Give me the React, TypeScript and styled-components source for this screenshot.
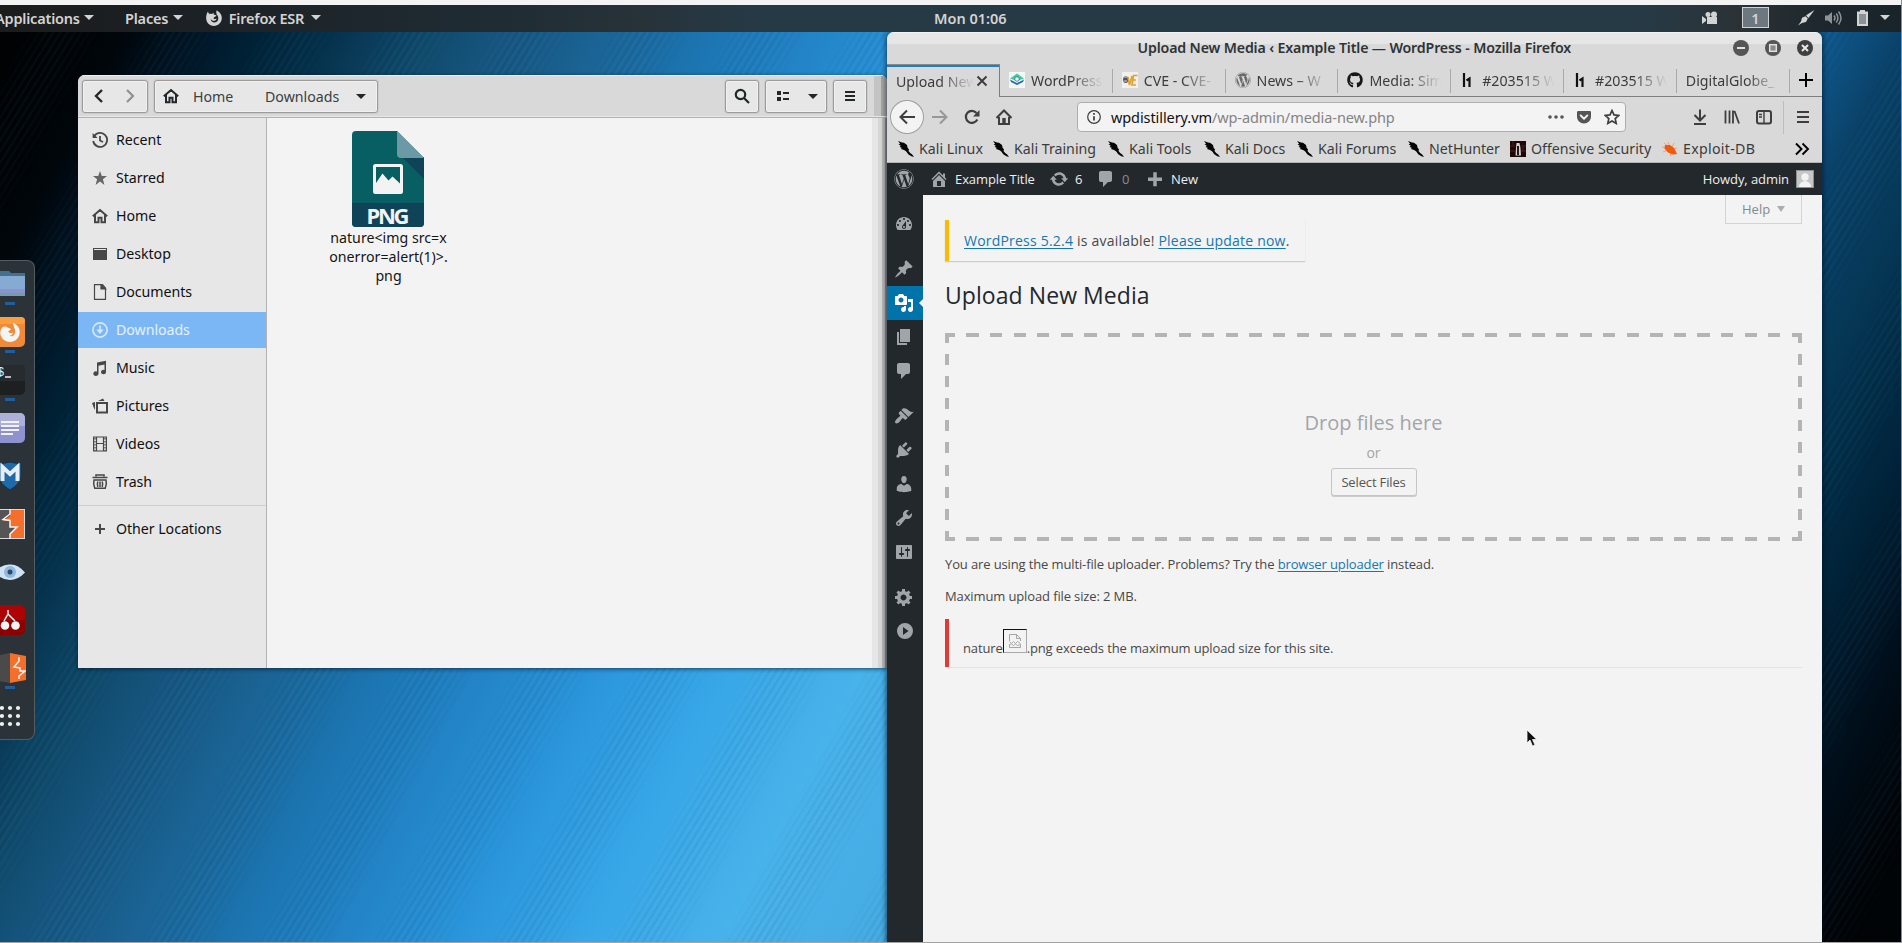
import React from "react";
import styled, { createGlobalStyle, css } from "styled-components";
import { FaGithub, FaWordpress, FaGetPocket } from "react-icons/fa";

const UI = `"Noto Sans", "Open Sans", sans-serif`;
const WEB = `"Open Sans", "Noto Sans", sans-serif`;

const Global = createGlobalStyle`
  * { box-sizing: border-box; }
  html, body { margin: 0; padding: 0; overflow: hidden; background: #f3f3f3; }
  svg { display: block; flex: none; }
  p, h1, h2 { margin: 0; }
`;

/* ---------- desktop ---------- */
const Screen = styled.div`
  width: 1902px;
  height: 943px;
  display: flex;
  flex-direction: column;
  padding-top: 5px;
  border-bottom: 1px solid #a3a3a3;
  border-right: 1px solid #8a9096;
  background: #f3f3f3;
  font-family: ${UI};
  font-size: 14px;
  overflow: hidden;
`;

const Desktop = styled.main`
  position: relative;
  flex: 1;
  overflow: hidden;
  background: linear-gradient(117.5deg,
    #000203 0px, #00060b 110px, #001626 175px, #002236 230px, #06334e 300px,
    #104a6b 380px, #175680 450px, #1b6698 550px, #1c75b1 630px, #2385c8 730px,
    #2b96dc 830px, #38a7e8 940px, #48b2ea 1060px, #45a9e0 1250px,
    #1a6aa5 1560px, #0f5588 1630px, #0a4269 1690px, #053654 1780px,
    #002339 1880px, #00101d 1960px, #000407 2040px);
  &::before {
    content: "";
    position: absolute;
    inset: 0;
    background: repeating-linear-gradient(122deg,
      rgba(0, 20, 45, 0.06) 0 2px, rgba(90, 190, 240, 0.05) 3px 4px, transparent 5px 6px);
    mask-image: repeating-linear-gradient(117.5deg,
      transparent 0 20px, #000 44px 64px, transparent 92px 104px);
  }
`;

const Panel = styled.header`
  height: 27px;
  display: grid;
  grid-template-columns: 1fr auto 1fr;
  align-items: center;
  padding-bottom: 2px;
  background: linear-gradient(90deg, #1b1c1c 0, #1c2125 200px, #1f2b33 480px, #273239 640px,
    #263a46 760px, #263a46 1640px, #2b3236 1740px, #1c262c 1830px, #19232a 100%);
  color: #d3d3d3;
  font-weight: 600;
  font-size: 14.5px;
`;
const PanelLeft = styled.nav`
  display: flex;
  align-items: center;
  margin-left: -5px;
`;
const PanelItem = styled.span<{ $w: number; $after: number }>`
  display: flex;
  align-items: center;
  justify-content: space-between;
  width: ${(p) => p.$w}px;
  margin-right: ${(p) => p.$after}px;
  white-space: nowrap;
  letter-spacing: -0.2px;
`;
const Clock = styled.span`
  width: 71px;
  text-align: center;
  white-space: nowrap;
  margin-left: 38px;
`;
const PanelRight = styled.div`
  display: flex;
  align-items: center;
  justify-content: flex-end;
  padding-right: 11px;
`;
const Workspace = styled.span`
  display: grid;
  place-items: center;
  width: 27px;
  height: 21px;
  margin: 0 28px 0 24px;
  border: 1px solid #d0d3d5;
  background: #6d777f;
`;
const Caret = styled.i<{ $c?: string; $s?: number }>`
  display: block;
  flex: none;
  border: ${(p) => p.$s ?? 5}px solid transparent;
  border-bottom: 0;
  border-top-color: ${(p) => p.$c ?? "#d3d3d3"};
`;

/* ---------- dock ---------- */
const Dock = styled.aside`
  position: absolute;
  left: 0;
  top: 228px;
  width: 35px;
  height: 480px;
  background: #2b3338;
  border: 1px solid #565b5e;
  border-left: 0;
  border-radius: 0 8px 8px 0;
  overflow: hidden;
`;
const DockItem = styled.div<{ $running?: boolean }>`
  display: flex;
  flex-direction: column;
  align-items: center;
  width: 30px;
  height: 48px;
  margin-left: -5px;
  padding-top: 8px;
  &::after {
    content: "";
    width: 10px;
    height: 3px;
    margin-top: 3px;
    background: ${(p) => (p.$running ? "#215d9c" : "transparent")};
  }
`;

/* ---------- file manager ---------- */
const FilesWindow = styled.section`
  position: absolute;
  left: 78px;
  top: 43px;
  width: 809px;
  height: 593px;
  display: flex;
  flex-direction: column;
  background: #f3f3f3;
  border-radius: 7px 7px 0 0;
  box-shadow: 0 1px 4px rgba(0, 15, 30, 0.65);
  overflow: hidden;
`;
const FilesHeader = styled.header`
  display: flex;
  align-items: center;
  height: 43px;
  padding: 0 20px 1px 4px;
  background: linear-gradient(90deg, transparent 796px, #c4c4c4 796px 803px, #a4a4a4 803px), #d9d9d9;
  border-top: 1px solid #efefef;
  border-bottom: 1px solid #b2b2b2;
  box-shadow: inset 0 -1px #e6e6e6;
`;
const ButtonGroup = styled.div<{ $w: number; $ml?: number | string }>`
  display: flex;
  align-items: center;
  justify-content: space-around;
  width: ${(p) => p.$w}px;
  height: 33px;
  margin-left: ${(p) => (typeof p.$ml === "string" ? p.$ml : `${p.$ml ?? 0}px`)};
  background: #e7e7e7;
  border: 1px solid #9b9b9b;
  border-radius: 3px;
  box-shadow: inset 0 0 0 1px #f1f1f1, 0 0 0 1px #cccccc;
  color: #222729;
`;
const Crumb = styled.span<{ $w: number; $ml: number }>`
  width: ${(p) => p.$w}px;
  margin-left: ${(p) => p.$ml}px;
  color: #3a4143;
  font-size: 14.2px;
  white-space: nowrap;
`;
const PathBar = styled(ButtonGroup)`
  justify-content: flex-start;
  padding-left: 8px;
`;
const FilesBody = styled.div`
  display: flex;
  flex: 1;
`;
const Places = styled.nav`
  width: 189px;
  padding-top: 4px;
  background: #e7e7e7;
  border-right: 1px solid #b2b2b2;
`;
const Place = styled.div<{ $active?: boolean }>`
  display: flex;
  align-items: center;
  gap: 8px;
  height: 36px;
  margin-bottom: 2px;
  padding: 0 0 1px 14px;
  color: #474747;
  span { color: #101010; font-size: 14.2px; white-space: nowrap; letter-spacing: -0.05px; }
  ${(p) => p.$active && css`
    background: #7bb7f5;
    color: #d6e8fa;
    span { color: #e6f1fc; }
  `}
`;
const PlaceRule = styled.hr`
  height: 1px;
  margin: 5px 0 5px;
  border: 0;
  background: #d0d0d0;
`;
const FileArea = styled.div`
  flex: 1;
  display: flex;
  justify-content: space-between;
  align-items: flex-start;
`;
const FileTile = styled.figure`
  display: flex;
  flex-direction: column;
  align-items: center;
  width: 130px;
  margin: 13px 0 0 56px;
  figcaption {
    margin-top: 1px;
    padding-left: 1px;
    color: #151515;
    font-size: 14.2px;
    line-height: 19px;
    text-align: center;
    white-space: pre-line;
  }
`;
const EdgeShade = styled.div`
  align-self: stretch;
  width: 15px;
  background: linear-gradient(90deg, #e6e6e6 0 6px, #d6d6d6 6px 10px, #b9b9b9 10px 13px, #8e8e8e 13px);
`;

/* ---------- browser ---------- */
const Browser = styled.section`
  position: absolute;
  left: 887px;
  top: 0;
  width: 935px;
  height: 911px;
  display: flex;
  flex-direction: column;
  background: #d9d9d9;
  border-radius: 7px 7px 0 0;
  box-shadow: 0 0 5px 1px rgba(0, 12, 25, 0.6);
  overflow: hidden;
`;
const TitleBar = styled.header`
  display: grid;
  grid-template-columns: 1fr auto 1fr;
  align-items: center;
  height: 32px;
  padding-right: 9px;
  background: linear-gradient(#f3f3f3 0 1px, #e6e6e6 1px 12px, #d9d9d9 12px);
  h1 {
    width: 434px;
    margin: 0 -9px 2px 0;
    font-size: 14.2px;
    font-weight: 600;
    letter-spacing: -0.15px;
    color: #2e3436;
    white-space: nowrap;
  }
`;
const WindowButtons = styled.div`
  display: flex;
  justify-content: flex-end;
  gap: 16px;
`;
const Tabs = styled.div`
  display: flex;
  height: 33px;
`;
const Tab = styled.div<{ $active?: boolean }>`
  display: flex;
  align-items: center;
  position: relative;
  width: 112.8px;
  padding: 0 10px 0 9px;
  color: #3b3b3b;
  border-bottom: 1px solid #7e7e7e;
  &::after {
    content: "";
    position: absolute;
    right: 0;
    top: 5px;
    width: 1px;
    height: 24px;
    background: #a9a9a9;
  }
  ${(p) => p.$active && css`
    width: 113px;
    padding: 0 9px 0 9px;
    border-bottom: 0;
    border-right: 1px solid #7e7e7e;
    border-top: 1px solid #8a8a8a;
    box-shadow: inset 0 2px #1d7fc4;
    &::after { display: none; }
  `}
`;
const TabTitle = styled.span<{ $ml?: number }>`
  flex: 1;
  min-width: 0;
  margin-left: ${(p) => p.$ml ?? 6}px;
  overflow: hidden;
  white-space: nowrap;
  font-size: 14.2px;
  mask-image: linear-gradient(90deg, #000 calc(100% - 34px), transparent);
`;
const NewTab = styled.div`
  flex: 1;
  display: grid;
  place-items: center;
  border-bottom: 1px solid #7e7e7e;
`;
const NavBar = styled.div`
  display: flex;
  align-items: center;
  height: 39px;
  padding: 1px 11px 0 3px;
  color: #3e3e3e;
`;
const BackButton = styled.div`
  display: grid;
  place-items: center;
  width: 34px;
  height: 34px;
  border: 1px solid #9d9d9d;
  border-radius: 50%;
  background: #f3f3f3;
`;
const NavIcons = styled.div<{ $ml: number; $gap?: number }>`
  display: flex;
  align-items: center;
  gap: ${(p) => p.$gap ?? 16}px;
  margin-left: ${(p) => p.$ml}px;
`;
const UrlBar = styled.div`
  display: flex;
  align-items: center;
  width: 550px;
  height: 30px;
  margin-left: 65px;
  padding: 0 5px 0 9px;
  border: 1px solid #adadad;
  border-radius: 4px;
  background: #f3f3f3;
`;
const Url = styled.span`
  flex: 1;
  margin-left: 10px;
  color: #848484;
  font-size: 14.5px;
  letter-spacing: -0.08px;
  white-space: nowrap;
  b { font-weight: 400; color: #111; }
`;
const NavRule = styled.i`
  width: 1px;
  height: 33px;
  margin: 0 11px 0 11px;
  background: #bdbdbd;
`;
const Bookmarks = styled.div`
  display: flex;
  align-items: center;
  height: 27px;
  padding: 0 11px 1px 11px;
  border-bottom: 1px solid #b4b4b4;
`;
const Bookmark = styled.span<{ $w: number }>`
  display: flex;
  align-items: center;
  gap: 5px;
  width: ${(p) => p.$w + 20}px;
  margin-right: 12px;
  color: #3b3b3b;
  font-size: 14.2px;
  white-space: nowrap;
  &:nth-child(8) { letter-spacing: 0.3px; }
`;

/* ---------- wordpress ---------- */
const AdminBar = styled.div`
  display: flex;
  align-items: center;
  height: 32px;
  padding: 0 8px 0 7px;
  background: #23282d;
  color: #eeeeee;
  font-family: ${WEB};
  font-size: 13px;
  letter-spacing: -0.08px;
`;
const AdminItem = styled.span<{ $w: number; $gap?: number; $dim?: boolean }>`
  display: flex;
  align-items: center;
  gap: ${(p) => p.$gap ?? 6}px;
  width: ${(p) => p.$w}px;
  white-space: nowrap;
  color: ${(p) => (p.$dim ? "#888d91" : "#eeeeee")};
  svg { color: #a0a5aa; }
`;
const Howdy = styled.span`
  display: flex;
  align-items: center;
  gap: 7px;
  margin-left: auto;
`;
const AdminBody = styled.div`
  display: flex;
  flex: 1;
  font-family: ${WEB};
`;
const AdminMenu = styled.nav`
  width: 36px;
  padding-top: 12px;
  background: #23282d;
  color: #a0a5aa;
`;
const MenuItem = styled.div<{ $gap?: boolean; $active?: boolean }>`
  position: relative;
  display: grid;
  place-items: center;
  height: 34px;
  margin-top: ${(p) => (p.$gap ? 11 : 0)}px;
  padding-right: 2px;
  ${(p) => p.$active && css`
    background: #0073aa;
    color: #fff;
    &::after {
      content: "";
      position: absolute;
      right: 0;
      top: 13px;
      border: 4px solid transparent;
      border-left: 0;
      border-right-color: #f3f3f3;
    }
  `}
`;
const Content = styled.div`
  position: relative;
  flex: 1;
  padding: 25px 20px 0 22px;
  background: #f3f3f3;
  color: #484848;
  font-size: 13px;
  a { color: #1577b0; text-decoration: underline; text-underline-offset: 2px; }
`;
const HelpTab = styled.div`
  position: absolute;
  right: 20px;
  top: 0;
  display: flex;
  align-items: center;
  justify-content: space-between;
  width: 77px;
  height: 29px;
  padding: 0 16px;
  border: 1px solid #d3d3d3;
  border-top: 0;
  color: #85898d;
`;
const HelpArrow = styled.i`
  border: 4px solid transparent;
  border-top: 6px solid #a9adb3;
  border-bottom: 0;
`;
const Notice = styled.div`
  display: flex;
  align-items: center;
  width: 360px;
  height: 41px;
  padding-left: 15px;
  border-left: 4px solid #ffba00;
  box-shadow: 0 1px 1px rgba(0, 0, 0, 0.16);
  font-size: 14px;
  white-space: pre;
  letter-spacing: 0.21px;
`;
const PageTitle = styled.h2`
  margin-top: 19px;
  height: 31px;
  line-height: 31px;
  font-size: 23px;
  font-weight: 400;
  color: #23282d;
  letter-spacing: 0.07px;
`;
const DropZone = styled.div`
  --h: repeating-linear-gradient(90deg, #b4b4b4 0 12.2px, transparent 12.2px 23.58px);
  --v: repeating-linear-gradient(180deg, #b4b4b4 0 11px, transparent 11px 22.1px);
  display: flex;
  flex-direction: column;
  align-items: center;
  width: 857px;
  height: 208px;
  margin-top: 22px;
  padding-top: 73px;
  background: var(--h) -2.1px 0 / 900px 4px no-repeat, var(--h) -2.1px 100% / 900px 4px no-repeat,
    var(--v) 0 -1.1px / 4px 240px no-repeat, var(--v) 100% -1.1px / 4px 240px no-repeat;
  color: #a3a5a8;
  h2 { font-size: 20px; font-weight: 400; line-height: 34px; }
  p { font-size: 14px; line-height: 25px; margin-bottom: 2px; }
`;
const SelectFiles = styled.button`
  width: 86px;
  height: 28px;
  margin-top: 1px;
  padding: 0;
  border: 1px solid #c6c6c6;
  border-radius: 3px;
  background: #f3f3f3;
  box-shadow: 0 1px 0 #cccccc;
  color: #555;
  font: 13px ${WEB};
  letter-spacing: -0.15px;
  line-height: 26px;
`;
const Line = styled.p<{ $mt: number }>`
  margin-top: ${(p) => p.$mt}px;
  height: 20px;
  line-height: 20px;
  white-space: nowrap;
  letter-spacing: -0.125px;
`;
const ErrorBox = styled.div`
  display: flex;
  align-items: flex-end;
  height: 48px;
  margin-top: 13px;
  padding: 0 0 10px 14px;
  border-left: 4px solid #df3a35;
  box-shadow: 0 1px 0 #e4e4e4;
  line-height: 18px;
  letter-spacing: -0.13px;
`;
const BrokenImage = styled.span`
  display: grid;
  place-items: center;
  width: 24px;
  height: 24px;
  margin-bottom: 4px;
  border: 1px solid #a9a9a9;
  border-top-color: #111;
  border-left-color: #111;
`;
const Pointer = styled.svg`
  position: absolute;
  left: 1526px;
  top: 697px;
`;

/* ---------- icon helpers ---------- */
type G = { children?: React.ReactNode; s?: number; vb?: string; w?: number; fill?: string; sw?: number };
const Stroke = ({ children, s = 16, vb = "0 0 16 16", w, sw = 2 }: G) => (
  <svg width={w ?? s} height={s} viewBox={vb} fill="none" stroke="currentColor" strokeWidth={sw}>{children}</svg>
);
const Solid = ({ children, s = 16, vb = "0 0 16 16", w, fill = "currentColor" }: G) => (
  <svg width={w ?? s} height={s} viewBox={vb} fill={fill} fillRule="evenodd">{children}</svg>
);
const Dash = ({ d, s = 20 }: { d: string; s?: number }) => (
  <Solid s={s} vb="0 0 20 20"><path d={d} /></Solid>
);

const dash = {
  dashboard: "M3.76 16h12.48c1.1-1.37 1.76-3.11 1.76-5 0-4.42-3.58-8-8-8s-8 3.58-8 8c0 1.89.66 3.63 1.76 5zM10 4c.55 0 1 .45 1 1s-.45 1-1 1-1-.45-1-1 .45-1 1-1zM6 6c.55 0 1 .45 1 1s-.45 1-1 1-1-.45-1-1 .45-1 1-1zm8 0c.55 0 1 .45 1 1s-.45 1-1 1-1-.45-1-1 .45-1 1-1zm-5.37 5.55L12 7v6c0 1.1-.9 2-2 2s-2-.9-2-2c0-.57.24-1.08.63-1.45zM4 10c.55 0 1 .45 1 1s-.45 1-1 1-1-.45-1-1 .45-1 1-1zm12 0c.55 0 1 .45 1 1s-.45 1-1 1-1-.45-1-1 .45-1 1-1zm-5 3c0-.55-.45-1-1-1s-1 .45-1 1 .45 1 1 1 1-.45 1-1z",
  post: "M10.44 3.02l1.82-1.82 6.36 6.35-1.83 1.82c-1.05-.68-2.48-.57-3.41.36l-.75.75c-.92.93-1.04 2.35-.35 3.41l-1.83 1.82-2.41-2.41-2.8 2.79c-.42.42-3.38 2.71-3.8 2.29s1.86-3.39 2.28-3.81l2.79-2.79L4.1 9.36l1.83-1.82c1.05.69 2.48.57 3.4-.36l.75-.75c.93-.92 1.05-2.35.36-3.41z",
  media: "M13 11V4c0-.55-.45-1-1-1h-1.67L9 1H5L3.67 3H2c-.55 0-1 .45-1 1v7c0 .55.45 1 1 1h10c.55 0 1-.45 1-1zM7 4.5c1.38 0 2.5 1.12 2.5 2.5S8.38 9.5 7 9.5 4.5 8.38 4.5 7 5.62 4.5 7 4.5zM14 6h5v10.5c0 1.38-1.12 2.5-2.5 2.5S14 17.88 14 16.5s1.12-2.5 2.5-2.5c.17 0 .34.02.5.05V9h-3V6zm-4 8.05V13h2v3.5c0 1.38-1.12 2.5-2.5 2.5S7 17.88 7 16.5 8.12 14 9.5 14c.17 0 .34.02.5.05z",
  page: "M6 15V2h10v13H6zm-1 1h8v2H3V5h2v11z",
  comments: "M5 2h9c1.1 0 2 .9 2 2v7c0 1.1-.9 2-2 2h-2l-5 5v-5H5c-1.1 0-2-.9-2-2V4c0-1.1.9-2 2-2z",
  appearance: "M14.48 11.06L7.41 3.99l1.5-1.5c.5-.56 2.3-.47 3.51.32 1.21.8 1.43 1.28 2.91 2.1 1.18.64 2.45 1.26 4.45.85zm-.71.71L6.7 4.7 4.93 6.47c-.39.39-.39 1.02 0 1.41l1.06 1.06c.39.39.39 1.03 0 1.42-.6.6-1.43 1.11-2.21 1.69-.35.26-.7.53-1.01.84C1.43 14.23.4 16.08 1.4 17.07c.99 1 2.84-.03 4.18-1.36.31-.31.58-.66.85-1.02.57-.78 1.08-1.61 1.69-2.21.39-.39 1.02-.39 1.41 0l1.06 1.06c.39.39 1.02.39 1.41 0z",
  plugins: "M13.11 4.36L9.87 7.6 8 5.73l3.24-3.24c.35-.34 1.05-.2 1.56.32.52.51.66 1.21.31 1.55zm-8 1.77l.91-1.12 9.01 9.01-1.19.84c-.71.71-2.63 1.16-3.82 1.16H6.14L4.9 17.26c-.59.59-1.54.59-2.12 0-.59-.58-.59-1.53 0-2.12l1.24-1.24v-3.88c0-1.13.4-3.19 1.09-3.89zm7.26 3.97l3.24-3.24c.34-.35 1.04-.21 1.55.31.52.51.66 1.21.31 1.55l-3.24 3.25z",
  users: "M10 9.25c-2.27 0-2.73-3.44-2.73-3.44C7 4.02 7.82 2 9.97 2c2.16 0 2.98 2.02 2.71 3.81 0 0-.41 3.44-2.68 3.44zm0 2.57L12.72 10c2.39 0 4.52 2.33 4.52 4.53v2.49s-3.65 1.13-7.24 1.13c-3.65 0-7.24-1.13-7.24-1.13v-2.49c0-2.25 1.94-4.48 4.47-4.48z",
  tools: "M16.68 9.77c-1.34 1.34-3.3 1.67-4.95.99l-5.41 6.52c-.99.99-2.59.99-3.58 0s-.99-2.59 0-3.57l6.52-5.42c-.68-1.65-.35-3.61.99-4.95 1.28-1.28 3.12-1.62 4.72-1.06l-2.89 2.89 2.82 2.82 2.86-2.87c.53 1.58.18 3.39-1.08 4.65zM3.81 16.21c.4.39 1.04.39 1.43 0 .4-.4.4-1.04 0-1.43-.39-.4-1.03-.4-1.43 0-.39.39-.39 1.03 0 1.43z",
  settings: "M18 16V4c0-.55-.45-1-1-1H3c-.55 0-1 .45-1 1v12c0 .55.45 1 1 1h14c.55 0 1-.45 1-1zM8 11h1c.55 0 1 .45 1 1s-.45 1-1 1H8v1.5c0 .28-.22.5-.5.5s-.5-.22-.5-.5V13H6c-.55 0-1-.45-1-1s.45-1 1-1h1V5.500c0-.28.22-.5.5-.5s.5.22.5.5V11zm5-2h-1c-.55 0-1-.45-1-1s.45-1 1-1h1V5.500c0-.28.22-.5.5-.5s.5.22.5.5V7h1c.55 0 1 .45 1 1s-.45 1-1 1h-1v5.500c0 .28-.22.5-.5.5s-.5-.22-.5-.5V9z",
  gear: "M18 12h-2.18c-.17.7-.44 1.35-.81 1.93l1.54 1.54-2.1 2.1-1.54-1.54c-.58.36-1.23.63-1.91.79V19H8v-2.18c-.68-.16-1.33-.43-1.91-.79l-1.54 1.54-2.12-2.12 1.54-1.54c-.36-.58-.63-1.23-.79-1.91H1V9.03h2.17c.16-.7.44-1.35.8-1.94L2.43 5.55l2.1-2.1 1.54 1.54c.58-.37 1.24-.64 1.93-.81V2h3v2.18c.68.16 1.33.43 1.91.79l1.54-1.54 2.12 2.12-1.54 1.54c.36.59.64 1.24.8 1.94H18V12zm-8.5 1.5c1.66 0 3-1.34 3-3s-1.34-3-3-3-3 1.34-3 3 1.34 3 3 3z",
  play: "M11 2a8 8 0 1 1 0 16a8 8 0 0 1 0-16zM9 6v8l5.500-4z",
  home: "M16 8.500l1.530 1.530-1.060 1.060L10 4.600l-6.470 6.490-1.060-1.060L10 2.500l4 4v-2h2v4zm-6-2.460l6 5.990V18H4v-5.970zM12 17v-5H8v5h4z",
  update: "M10.2 3.28c3.53 0 6.43 2.61 6.92 6h2.08l-3.5 4-3.5-4h2.32c-.45-1.97-2.21-3.45-4.32-3.45-1.45 0-2.73.71-3.54 1.78L4.95 5.66C6.23 4.2 8.11 3.28 10.2 3.28zm-.4 13.44c-3.52 0-6.43-2.61-6.92-6H.8l3.5-4c1.17 1.33 2.33 2.67 3.5 4H5.48c.45 1.97 2.21 3.45 4.32 3.45 1.45 0 2.73-.71 3.54-1.78l1.71 1.95c-1.28 1.46-3.15 2.38-5.25 2.38z",
  plus: "M17 8.500v3.500h-5.250v5.250h-3.500V12H3V8.500h5.250V3.250h3.500V8.500z",
};

const HouseIcon = () => (
  <Stroke sw={2}><path d="M.8 8.300 8 2l7.200 6.300M3 7v7.200h3.500V9.800h3v4.400H13V7" /></Stroke>
);
const FirefoxMark = ({ s = 16 }: { s?: number }) => (
  <Solid s={s}>
    <path d="M10.300.6C14 2 16 5 15.800 8.600 15.500 13 12 16 8 16S.5 13 .2 8.800C0 6 .6 3.500 2 1.600c.2 1 .5 1.700 1 2.200 1-.3 2-.2 2.900.2L7.700 2.700c-.2 1.100 0 1.700.7 2.100l1.800.4c-.2 1-.9 1.500-2 2-.6.500-.7 1.200-.3 1.700 1 .2 1.800-.4 2.700-.2-.6 1.700-2 2.500-3.700 2-1.200-.3-2-1.200-2.300-2.200.1 2.500 2 4.100 4 4 2.500-.2 4-2.200 3.700-4.800-.2-1.800-.8-2.600-1.600-3.300.5 1.100.6 1.700.5 2.300C10.700 5 10.200 3 10.300.6z" />
  </Solid>
);
const KaliIcon = () => (
  <Solid fill="#050505">
    <path d="M0 0 4 1.500 6 1.700 9 4 9.700 7 11 8.200 10.500 10l1.700 2 2 1.600L16 16l-2.600-.7-3.200-2-1.700-2.600L7 9.600 5.400 8.700 3 8l.8-1.300L1.600 6l1.200-1.200L.6 3.300l1.500-.5z" />
  </Solid>
);
const OffsecIcon = () => (
  <svg width="16" height="16"><rect width="16" height="16" fill="#1d0707" /><path d="M0 5h5M11 5h5M0 10h5M11 10h5M3 0v4M13 6v4" stroke="#542020" /><path d="M6.500 2h3l1 5 .5 7.500H5.500L6 7z" fill="#d8d0d0" /><path d="M8 5v9" stroke="#0a0505" strokeWidth="1.800" /></svg>
);
const ExploitIcon = () => (
  <svg width="16" height="16"><path d="M2 2 8 7M0 6l6 1M6 1l2 5M12 2l-2 4M1 11l5-2M15 7l-4 1M15 13l-4-3M8 15l1-3" stroke="#f3a173" fill="none" /><path d="M3 4 8 4l4 3 3 6-4 .5-5-2L2.500 7.500z" fill="#f05a0a" /></svg>
);
const GlobeFav = () => (
  <svg width="16" height="16"><rect width="16" height="16" fill="#f6f6f6" /><path d="M8 1.500 15 6.500 8 9 1 6.500z" fill="#3ad0a0" /><path d="M1 7.500 8 11l7-3.500L14 10l-6 3-6-3z" fill="#1f6fae" /><circle cx="8" cy="7" r="2.300" fill="#e9f2f2" stroke="#4b6a7c" strokeWidth=".8" /></svg>
);
const CveFav = () => (
  <svg width="16" height="16"><rect width="16" height="16" fill="#f2f0ea" /><ellipse cx="3.700" cy="7.500" rx="2.600" ry="3.600" fill="#555" /><path d="M2 5h3M2 9h3" stroke="#ddd" /><path d="M6 5l1.500 8L10 4M15.500 3.500h-4L10 13h4M11 8h3" fill="none" stroke="#e0a136" strokeWidth="1.700" /></svg>
);
const H1Fav = () => (
  <svg width="16" height="16"><path d="M4 1v14" stroke="#111" strokeWidth="2.200" /><path d="M6.500 8.500 9.500 6.500V15" stroke="#111" strokeWidth="2.200" fill="none" /></svg>
);

/* ---------- data ---------- */
const places: [string, React.ReactNode][] = [
  ["Recent", <Stroke key="i" sw={1.8}><path d="M2 4.500A7 7 0 1 1 1.200 9M8 4v4.500l3 1.500" /><path d="M.6 1v5h5z" fill="currentColor" stroke="none" /></Stroke>],
  ["Starred", <Solid key="i"><path d="M8 1 9.800 6H15l-4.100 3.200L12.400 15 8 11.500 3.600 15 5.100 9.200 1 6h5.200z" fill="#666" /></Solid>],
  ["Home", <HouseIcon key="i" />],
  ["Desktop", <Solid key="i"><path d="M1 2h14v12H1zM2 3v1h12V3z" /></Solid>],
  ["Documents", <Stroke key="i" sw={1.2}><path d="M2.500.6h8l3 3.400v11.400h-11z" /><path d="M9 .6V5h4.500z" fill="currentColor" /></Stroke>],
  ["Downloads", <Stroke key="i" sw={1.7}><circle cx="8" cy="8" r="7.100" /><path d="M8 3.500V9" /><path d="M4.300 7.500h7.400L8 12z" fill="currentColor" stroke="none" /></Stroke>],
  ["Music", <Solid key="i"><path d="M5 2.500 14 .8V12a2.500 2.200 0 1 1-1.500-2V4.500L6.500 5.700v7.600A2.600 2.300 0 1 1 5 11.500z" /></Solid>],
  ["Pictures", <Stroke key="i"><path d="M5 5h10v9.500H5z" /><path d="M0 5l3-1v8L1.500 9zM6 3l5-2.500L12.500 3z" fill="currentColor" stroke="none" /></Stroke>],
  ["Videos", <Stroke key="i" sw={1.2}><path d="M1.600 1h12.800v14H1.600zM4.500 1v14M11.500 1v14M4.500 7.500h7" /><path d="M3 2v13M13 2v13" strokeDasharray="1.500 1.500" /></Stroke>],
  ["Trash", <Stroke key="i" sw={1.6}><path d="M4 2.500V1h8v1.500M.5 3.500h15M2 6q-1 3.500.8 8.300h10.400Q15 9.500 14 6zM5.800 7.500q-1 3 0 5.500M8 7.500V13M10.200 7.500q1 3 0 5.500" strokeWidth="1.500" /></Stroke>],
];

const tabs: [string, React.ReactNode][] = [
  ["WordPress", <GlobeFav key="i" />],
  ["CVE - CVE-", <CveFav key="i" />],
  ["News – W", <FaWordpress key="i" size={16} color="#6b6b6b" />],
  ["Media: Sim", <FaGithub key="i" size={16} color="#191717" />],
  ["#203515 W", <H1Fav key="i" />],
  ["#203515 W", <H1Fav key="i" />],
  ["DigitalGlobe_", null],
];

const bookmarks: [string, number, React.ReactNode][] = [
  ["Kali Linux", 63, <KaliIcon key="i" />],
  ["Kali Training", 83, <KaliIcon key="i" />],
  ["Kali Tools", 64, <KaliIcon key="i" />],
  ["Kali Docs", 61, <KaliIcon key="i" />],
  ["Kali Forums", 79, <KaliIcon key="i" />],
  ["NetHunter", 70, <KaliIcon key="i" />],
  ["Offensive Security", 120, <OffsecIcon key="i" />],
  ["Exploit-DB", 72, <ExploitIcon key="i" />],
];

const menu: { d: string; gap?: boolean; active?: boolean }[] = [
  { d: dash.dashboard },
  { d: dash.post, gap: true },
  { d: dash.media, active: true },
  { d: dash.page },
  { d: dash.comments },
  { d: dash.appearance, gap: true },
  { d: dash.plugins },
  { d: dash.users },
  { d: dash.tools },
  { d: dash.settings },
  { d: dash.gear, gap: true },
  { d: dash.play },
];

const dockIcons: [React.ReactNode, boolean][] = [
  [<svg key="0" width="30" height="30"><path d="M0 2h14l2 2h14v23H0z" fill="#44708f" /><path d="M0 7h30v20H0z" fill="#86abd3" /><path d="M0 20h30v4H0z" fill="#8d93cf" /><path d="M0 24h30v3H0z" fill="#6fa0a6" /></svg>, true],
  [<svg key="1" width="30" height="30"><rect width="30" height="30" rx="5" fill="#ee8a3a" /><rect width="30" height="7" rx="4" fill="#fb9d41" /><g transform="translate(5,5) scale(1.250)" fill="#f5f5f5"><path d="M10.300.6C14 2 16 5 15.800 8.600 15.500 13 12 16 8 16S.5 13 .2 8.800C.2 7 1 5 2 4c2-1 3.500-.2 5 .7l1.800.8c-.2 1-1.500 1-2.200 2 1 2 3 1.500 4 .6-.6 2.400-2 3.200-3.700 2.700 3 1.500 5.500-.5 5.200-3.500C12 5 10.500 3.500 10.300.6z" /></g></svg>, true],
  [<svg key="2" width="30" height="30"><rect width="30" height="30" rx="5" fill="#1d1f20" /><path d="M0 5a5 5 0 0 1 5-5h20a5 5 0 0 1 5 5v11H0z" fill="#262b30" /><path d="M10 12h6" stroke="#eee" strokeWidth="1.300" /><text x="2" y="11" fontFamily="Liberation Mono" fontSize="12" fill="#eee">$</text></svg>, true],
  [<svg key="3" width="30" height="30"><rect width="30" height="30" rx="5" fill="#8e92cf" /><path d="M0 5a5 5 0 0 1 5-5h20a5 5 0 0 1 5 5v8H0z" fill="#aeb0d8" /><path d="M6 9h18M6 13h18M6 17h18M6 21h12" stroke="#f3f3f3" strokeWidth="2" /></svg>, false],
  [<svg key="4" width="30" height="30"><path d="M15 1q6 2 11 1v14q-1 7-11 13Q5 23 4 16V2q5 1 11-1z" fill="#1f6aa8" stroke="#13324d" /><path d="M7.500 20V6l7.500 7 7.500-7v14" fill="none" stroke="#e9eef3" strokeWidth="4" /></svg>, false],
  [<svg key="5" width="30" height="30"><rect x=".5" y=".5" width="29" height="29" fill="#f36f2b" stroke="#d8d8d8" /><path d="M1 1h14v6l-7 5h7v6h7l-7 7v4H1z" fill="#555" /><path d="M15 0v5l-7 5.500 7 1V18h7l-7 7v5" fill="none" stroke="#f3f3f3" strokeWidth="1.500" /></svg>, false],
  [<svg key="6" width="32" height="30"><path d="M0 15Q8 7 16 7.500 24 7 31 15.500 24 23 16 23 8 23 0 15z" fill="#cfe3f4" /><circle cx="16" cy="15" r="6" fill="#8db8df" /><circle cx="16" cy="15" r="2.500" fill="#31485f" /></svg>, false],
  [<svg key="7" width="30" height="30"><rect width="30" height="30" rx="5" fill="#8c0000" /><path d="M0 5a5 5 0 0 1 5-5h20a5 5 0 0 1 5 5v10H0z" fill="#ac0404" /><path d="M13 5v4l-4 7M13 9l7 7" stroke="#f3f3f3" strokeWidth="1.500" fill="none" /><circle cx="10" cy="20.500" r="4.300" fill="#f3f3f3" /><circle cx="20.500" cy="20.500" r="4.300" fill="#f3f3f3" /></svg>, false],
  [<svg key="8" width="32" height="30"><path d="M0 3 16 0v30L0 27z" fill="#4a4a4a" /><path d="M16 0l16 3v24l-16 3z" fill="#f36f2b" /><path d="M25 4v4l-5 6 6 1v3h5l-6 5v3" fill="none" stroke="#f3f3f3" strokeWidth="1.500" /></svg>, true],
  [<svg key="9" width="30" height="30" fill="#eeeeee">{[7, 15, 23].map((y) => [7, 15, 23].map((x) => <circle key={`${x}${y}`} cx={x} cy={y} r="2.100" />))}</svg>, false],
];

export default function App() {
  return (
    <Screen>
      <Global />
      <Panel>
        <PanelLeft>
          <PanelItem $w={99} $after={31}>Applications <Caret /></PanelItem>
          <PanelItem $w={58} $after={23}>Places <Caret /></PanelItem>
          <PanelItem $w={115} $after={0}><FirefoxMark />Firefox ESR <Caret /></PanelItem>
        </PanelLeft>
        <Clock>Mon 01:06</Clock>
        <PanelRight>
          <Solid><circle cx="6" cy="4.500" r="2.500" /><circle cx="12" cy="4.500" r="3" /><path d="M5 7h10v7H5zM0 6l4 3v2l-4 3z" /></Solid>
          <Workspace>1</Workspace>
          <Solid w={18}><path d="M16.500 0 10 4 8 5.500l2.500 2.500L12 6zM7.500 6.200 4 7.800 3 11.500l-3 4L4 13l4-1 1.800-3.500z" /></Solid>
          <Solid w={37} vb="-10 0 37 16" fill="#8d9294"><path d="M0 5.500h3L7 2v12l-4-3.500H0z" /><path d="M9 5.500q2 2.500 0 5M11.200 3.500q3.500 4.500 0 9M13.500 1.500q5 6.500 0 13" fill="none" stroke="#8d9294" strokeWidth="1.500" /></Solid>
          <Solid w={28} vb="-3 0 28 16"><path d="M2 1.500h3V0h5v1.500h3V16H2z" /><rect x="4" y="4" width="7" height="10" fill="#8b9297" /></Solid>
          <Caret />
        </PanelRight>
      </Panel>
      <Desktop>
        <FilesWindow>
          <FilesHeader>
            <ButtonGroup $w={66}>
              <Stroke sw={2.4}><path d="M11 2 5 8l6 6" /></Stroke>
              <svg width="16" height="16" fill="none" stroke="#8e9192" strokeWidth="2.200"><path d="M4 2l6 6-6 6" /></svg>
            </ButtonGroup>
            <PathBar $w={224} $ml={6}>
              <HouseIcon />
              <Crumb $w={40} $ml={14}>Home</Crumb>
              <Crumb $w={73} $ml={32}>Downloads</Crumb>
              <Crumb $w={10} $ml={18}><Caret $c="#222729" /></Crumb>
            </PathBar>
            <ButtonGroup $w={34} $ml="auto"><Stroke sw={2.2}><circle cx="6.500" cy="6.500" r="4.700" /><path d="M10 10l5 5" /></Stroke></ButtonGroup>
            <ButtonGroup $w={62} $ml={6}>
              <Solid><path d="M2 3h4v4H2zM2 9h4v4H2zM8 4h6v2H8zM8 10h6v2H8z" /></Solid>
              <Caret $c="#222729" />
            </ButtonGroup>
            <ButtonGroup $w={34} $ml={6}><Stroke><path d="M3 4h10M3 8h10M3 12h10" /></Stroke></ButtonGroup>
          </FilesHeader>
          <FilesBody>
            <Places>
              {places.map(([name, icon]) => (
                <Place key={name} $active={name === "Downloads"}>{icon}<span>{name}</span></Place>
              ))}
              <PlaceRule />
              <Place><Stroke><path d="M8 3v10M3 8h10" /></Stroke><span>Other Locations</span></Place>
            </Places>
            <FileArea>
              <FileTile>
                <svg width="72" height="96">
                  <path d="M4 0h41l27 27v65a4 4 0 0 1-4 4H4a4 4 0 0 1-4-4V4a4 4 0 0 1 4-4z" fill="#085f63" />
                  <path d="M50 26 72 48V26z" fill="#0f4357" />
                  <path d="M45 0l27 27H49a4 4 0 0 1-4-4z" fill="#6c99a6" />
                  <path d="M0 72h72v20a4 4 0 0 1-4 4H4a4 4 0 0 1-4-4z" fill="#0f4357" />
                  <rect x="22.500" y="34.500" width="27" height="27" rx="1" fill="none" stroke="#f3f3f3" strokeWidth="3" />
                  <path d="M24 52l6.500-9.500 6 7 4-4 7.500 7V61H24z" fill="#f3f3f3" />
                  <text x="36" y="92.500" textAnchor="middle" fontFamily="Noto Sans" fontWeight="700" fontSize="22" textLength="43" fill="#f3f3f3">PNG</text>
                </svg>
                <figcaption>{"nature<img src=x\nonerror=alert(1)>.\npng"}</figcaption>
              </FileTile>
              <EdgeShade />
            </FileArea>
          </FilesBody>
        </FilesWindow>

        <Browser>
          <TitleBar>
            <span />
            <h1>Upload New Media ‹ Example Title — WordPress - Mozilla Firefox</h1>
            <WindowButtons>
              <svg width="16" height="16"><circle cx="8" cy="8" r="8" fill="#555" /><path d="M4 8h8" stroke="#e0e0e0" strokeWidth="2" /></svg>
              <svg width="16" height="16"><circle cx="8" cy="8" r="8" fill="#555" /><rect x="4.700" y="4.700" width="6.600" height="6.600" fill="#888" stroke="#e0e0e0" strokeWidth="1.500" /></svg>
              <svg width="16" height="16"><circle cx="8" cy="8" r="8" fill="#3f3f3f" /><path d="M5 5l6 6M11 5l-6 6" stroke="#e8e8e8" strokeWidth="2" /></svg>
            </WindowButtons>
          </TitleBar>
          <Tabs>
            <Tab $active>
              <TabTitle $ml={0}>Upload New</TabTitle>
              <Stroke sw={1.9}><path d="M3.500 3.500l9 9M12.500 3.500l-9 9" /></Stroke>
            </Tab>
            {tabs.map(([title, icon], i) => (
              <Tab key={i}>{icon}<TabTitle $ml={icon ? 6 : 0}>{title}</TabTitle></Tab>
            ))}
            <NewTab><Stroke><path d="M8 1v14M1 8h14" /></Stroke></NewTab>
          </Tabs>
          <NavBar>
            <BackButton><Stroke><path d="M16 8H1.500M8 1.500 1.500 8 8 14.500" /></Stroke></BackButton>
            <NavIcons $ml={8}>
              <svg width="16" height="16" fill="none" stroke="#979797" strokeWidth="2"><path d="M0 8h14.500M8 1.500 14.500 8 8 14.500" /></svg>
              <Stroke sw={2.2}><path d="M13.300 10.500A6 6 0 1 1 12.500 4" /><path d="M15.500 1v6.500H9z" fill="currentColor" stroke="none" /></Stroke>
              <Stroke><path d="M.5 9 8 1.500 15.500 9M3 8v7h10V8" /><path d="M6.300 9h3.400v6H6.300z" fill="currentColor" stroke="none" /></Stroke>
            </NavIcons>
            <UrlBar>
              <Stroke s={14} sw={1.4}><circle cx="8" cy="8" r="7.200" /><path d="M8 7v5M8 3.500v2" strokeWidth="2" /></Stroke>
              <Url><b>wpdistillery.vm</b>/wp-admin/media-new.php</Url>
              <NavIcons $ml={0} $gap={12}>
                <Solid fill="#555"><circle cx="2" cy="8" r="1.800" /><circle cx="8" cy="8" r="1.800" /><circle cx="14" cy="8" r="1.800" /></Solid>
                <FaGetPocket size={16} color="#555" />
                <Stroke sw={1.7}><path d="M8 1.500l2 4.400 4.800.5-3.600 3.200 1 4.800L8 12l-4.200 2.400 1-4.800L1.200 6.400 6 5.900z" /></Stroke>
              </NavIcons>
            </UrlBar>
            <NavIcons $ml={66}>
              <Stroke><path d="M8 .5v11M2.500 6 8 11.500 13.500 6M2 15h12" /></Stroke>
              <Stroke><path d="M1.500 1.500v13M5.500 1.500v13M9 1.500v13M10.500 2l4.500 12.500" strokeWidth="1.800" /></Stroke>
              <Stroke><rect x="1" y="2" width="14" height="12.500" rx="2" /><path d="M8 2v12M3 5.500h3M3 8h3" strokeWidth="1.400" /></Stroke>
            </NavIcons>
            <NavRule />
            <Stroke><path d="M2 3h12M2 8h12M2 13h12" /></Stroke>
          </NavBar>
          <Bookmarks>
            {bookmarks.map(([name, w, icon]) => (
              <Bookmark key={name} $w={w}>{icon}{name}</Bookmark>
            ))}
            <NavIcons $ml={28}><Stroke sw={1.900}><path d="M2 2.500 7.500 8 2 13.500M8.500 2.500 14 8l-5.500 5.500" /></Stroke></NavIcons>
          </Bookmarks>

          <AdminBar>
            <AdminItem $w={35}><FaWordpress size={20} /></AdminItem>
            <AdminItem $w={120}><Dash d={dash.home} />Example Title</AdminItem>
            <AdminItem $w={47}><Dash d={dash.update} />6</AdminItem>
            <AdminItem $w={49} $dim><Dash d={dash.comments} />0</AdminItem>
            <AdminItem $w={60}><Dash d={dash.plus} />New</AdminItem>
            <Howdy>
              Howdy, admin
              <svg width="18" height="18"><rect x=".5" y=".5" width="17" height="17" fill="#c6c6c6" stroke="#8d8f91" /><circle cx="9" cy="7" r="3.700" fill="#f3f3f3" /><path d="M3 17q0-5 6-6 6 1 6 6z" fill="#f3f3f3" /></svg>
            </Howdy>
          </AdminBar>
          <AdminBody>
            <AdminMenu>
              {menu.map((m, i) => (
                <MenuItem key={i} $gap={m.gap} $active={m.active}><Dash d={m.d} /></MenuItem>
              ))}
            </AdminMenu>
            <Content>
              <HelpTab>Help <HelpArrow /></HelpTab>
              <Notice><a>WordPress 5.2.4</a> is available! <a>Please update now</a>.</Notice>
              <PageTitle>Upload New Media</PageTitle>
              <DropZone>
                <h2>Drop files here</h2>
                <p>or</p>
                <SelectFiles>Select Files</SelectFiles>
              </DropZone>
              <Line $mt={13}>You are using the multi-file uploader. Problems? Try the <a>browser uploader</a> instead.</Line>
              <Line $mt={12}>Maximum upload file size: 2 MB.</Line>
              <ErrorBox>
                nature
                <BrokenImage>
                  <svg width="12" height="14" fill="none" stroke="#a5a5a5"><path d="M.5 7V.5h7l4 4V7M7.500.5v4h4M.5 7.500l2 2 2-2 2 2 2-2 3 2M.5 10.500v3h11v-3l-3 1-2-1.500-2 1.500-2-1.500z" /></svg>
                </BrokenImage>
                .png exceeds the maximum upload size for this site.
              </ErrorBox>
            </Content>
          </AdminBody>
        </Browser>

        <Dock>
          {dockIcons.map(([icon, running], i) => (
            <DockItem key={i} $running={running}>{icon}</DockItem>
          ))}
        </Dock>
        <Pointer width="12" height="18"><path d="M1 1v13l3-3 2.500 6 2.500-1-2.500-5.500h4.300z" fill="#111" stroke="#f5f5f5" strokeWidth=".8" /></Pointer>
      </Desktop>
    </Screen>
  );
}
